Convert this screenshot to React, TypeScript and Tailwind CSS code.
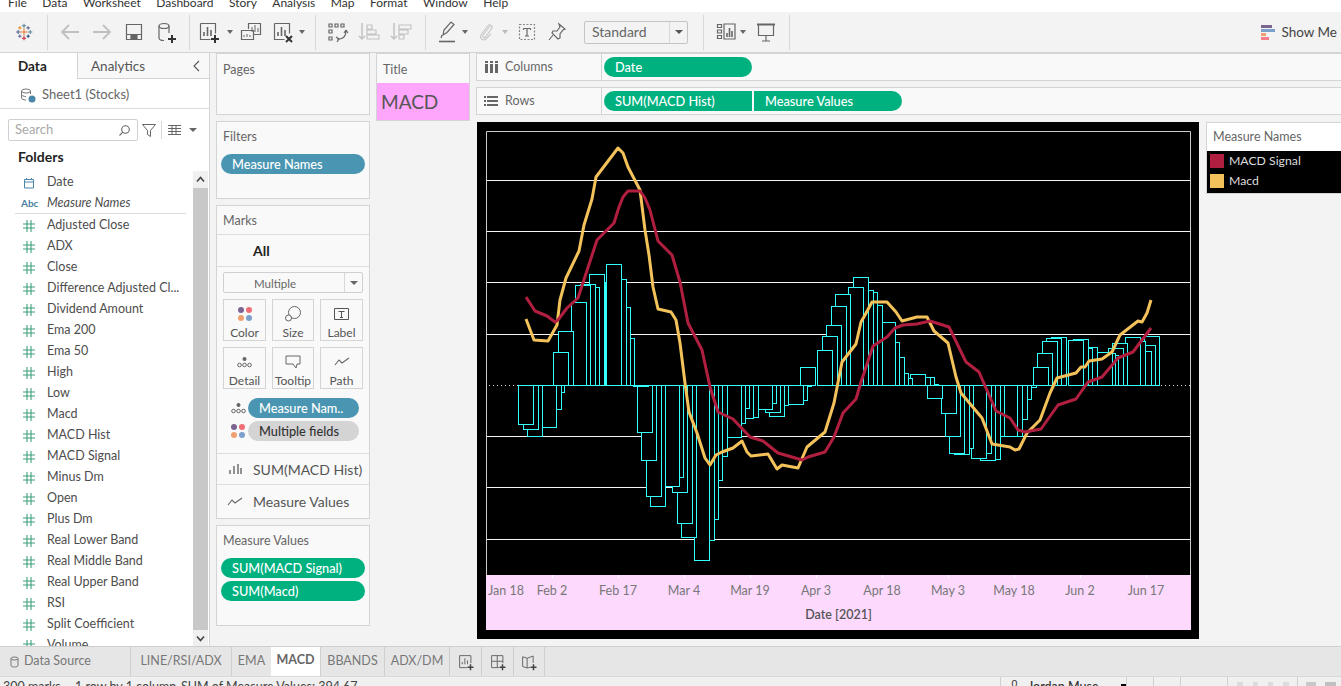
import React from "react";

const FONT = "[font-family:Lato,'Open_Sans',sans-serif]";

const FIELDS = [
  "Adjusted Close", "ADX", "Close", "Difference Adjusted Cl...", "Dividend Amount", "Ema 200", "Ema 50",
  "High", "Low", "Macd", "MACD Hist", "MACD Signal", "Minus Dm", "Open", "Plus Dm", "Real Lower Band",
  "Real Middle Band", "Real Upper Band", "RSI", "Split Coefficient", "Volume",
];

// [left x, far end y] of each histogram bar, in page pixels
const BARS: number[][] = [
  [518, 424], [523, 429], [527, 436], [541, 427], [546, 409], [549, 392], [553, 352], [558, 331], [571, 302],
  [575, 285], [580, 284], [584, 287], [589, 274], [590, 282], [606, 264], [611, 279], [615, 307], [619, 338],
  [633, 386], [637, 432], [641, 460], [646, 496], [650, 506], [664, 486], [668, 477], [672, 492], [677, 523],
  [681, 537], [694, 560], [699, 540], [703, 519], [707, 480], [712, 456], [726, 437], [730, 423], [734, 408],
  [738, 418], [743, 417], [757, 409], [761, 403], [765, 412], [769, 416], [773, 405], [788, 404], [792, 400],
  [796, 386], [800, 367], [817, 350], [822, 336], [826, 325], [831, 306], [835, 294], [848, 287], [853, 277],
  [858, 290], [862, 292], [867, 305], [880, 322], [884, 342], [889, 357], [893, 373], [897, 378], [910, 374],
  [915, 377], [919, 377], [923, 384], [927, 398], [941, 413], [945, 436], [949, 453], [954, 454], [958, 448],
  [971, 458], [976, 453], [980, 460], [985, 459], [989, 436], [1002, 436], [1007, 436], [1012, 419], [1016, 399],
  [1021, 387], [1033, 367], [1037, 353], [1042, 341], [1046, 338], [1051, 337], [1068, 340], [1073, 339],
  [1077, 348], [1082, 347], [1097, 352], [1100, 353], [1103, 355], [1108, 348], [1112, 343], [1125, 337],
  [1130, 341], [1136, 351], [1140, 345], [1144, 336],
];

const MACD =
  "526,319 534,340 548,341 557,325 560,300 566,278 579,251 584,225 592,199 596,177 618,148 623,153 628,167 640,190 645,230 649,255 653,287 658,309 671,312 676,320 680,343 685,383 689,412 697,433 705,458 710,465 716,455 722,452 733,448 742,441 747,452 751,456 768,454 777,469 782,465 798,468 807,447 825,432 834,403 842,362 856,344 861,322 865,315 872,302 887,302 896,312 902,321 917,317 927,317 934,331 948,343 956,377 961,393 982,418 992,444 1010,447 1015,450 1019,449 1027,433 1040,420 1050,393 1057,378 1076,373 1081,367 1085,367 1089,361 1102,359 1112,352 1120,335 1138,321 1142,322 1147,313 1151,300";
const SIGNAL =
  "526,297 535,311 547,316 555,322 558,320 567,308 578,298 597,240 614,223 619,207 623,197 628,191 640,191 645,198 650,210 658,241 672,255 680,282 688,323 702,350 710,387 718,412 733,419 750,437 763,441 778,453 792,457 802,460 808,457 825,452 834,437 843,413 856,399 861,382 873,346 887,337 895,328 903,325 917,324 930,321 949,327 966,362 979,372 996,411 1010,418 1018,430 1025,432 1041,429 1058,405 1076,399 1088,382 1102,377 1118,358 1133,352 1151,328";

function Ic({ children, size = 24 }: { children: React.ReactNode; size?: number }) {
  return (
    <svg width={size} height={size} viewBox="0 0 24 24" fill="none" stroke="#666" strokeWidth="1.2">
      {children}
    </svg>
  );
}

function Slot({ children, className = "" }: { children: React.ReactNode; className?: string }) {
  return <div className={`w-8 h-8 shrink-0 flex items-center justify-center ${className}`}>{children}</div>;
}

function Caret({ className = "" }: { className?: string }) {
  return (
    <div className={`w-[10px] shrink-0 flex justify-center ${className}`}>
      <div className="w-0 h-0 border-l-[3.5px] border-r-[3.5px] border-t-[4px] border-l-transparent border-r-transparent border-t-[#666]" />
    </div>
  );
}

function Sep({ className = "" }: { className?: string }) {
  return <div className={`w-px h-[35px] bg-[#d8d8d8] shrink-0 ${className}`} />;
}

function Plus() {
  return <path d="M14 19h8M18 15v8" stroke="#333" strokeWidth="2" />;
}

function Logo() {
  const crosses = [
    [12, 12, 4.5, "#e8762c"], [12, 4.5, 2.5, "#5b879b"], [12, 19.5, 2.5, "#c72037"], [5, 12, 2.5, "#5b6591"],
    [19.5, 12, 2.5, "#5b879b"], [7, 7, 2, "#eb912b"], [17, 7, 2, "#5b6591"], [7, 17, 2, "#5c6692"], [17, 17, 2, "#1f447a"],
  ] as const;
  return (
    <svg width="20" height="20" viewBox="0 0 24 24" fill="none" strokeWidth="1.3">
      {crosses.map(([x, y, r, c], i) => (
        <path key={i} d={`M${x - r} ${y}h${r * 2}M${x} ${y - r}v${r * 2}`} stroke={c} />
      ))}
    </svg>
  );
}

function Toolbar() {
  return (
    <div className="h-[41px] flex items-center bg-[#f3f3f3] shrink-0 border-b border-[#d4d4d4]">
      <div className="w-[47px] flex justify-center shrink-0"><Logo /></div>
      <Sep />
      <Slot className="ml-[6px]">
        <Ic><path d="M21 12H4M11 5l-7 7 7 7" stroke="#c0c0c0" strokeWidth="1.8" /></Ic>
      </Slot>
      <Slot>
        <Ic><path d="M3 12h17M13 5l7 7-7 7" stroke="#c0c0c0" strokeWidth="1.8" /></Ic>
      </Slot>
      <Slot>
        <Ic><path d="M4.5 4.5h15v15h-15zM4.5 14.5h15" /><path d="M9 15h6v4H9z" fill="#666" /></Ic>
      </Slot>
      <Slot>
        <Ic>
          <ellipse cx="10" cy="6" rx="5" ry="2.5" />
          <path d="M5 6v12c0 1.4 2 2.5 5 2.5M15 6v7" />
          <Plus />
        </Ic>
      </Slot>
      <Sep className="ml-[7px]" />
      <Slot className="ml-[3px]">
        <Ic>
          <path d="M3.5 3.5h15v10M3.5 3.5v16h10" />
          <path d="M7 16v-4M10.5 16V7M14 16v-6" strokeWidth="1.6" />
          <Plus />
        </Ic>
      </Slot>
      <Caret />
      <Slot>
        <Ic>
          <path d="M9.5 9V3.5h12v11H15M2.5 10.5h12v9h-12z" />
          <path d="M13 12V7M16 12V5M19 12V8M5 17v-2M8 17v-3M11 17v-2" strokeWidth="1" />
        </Ic>
      </Slot>
      <Slot>
        <Ic>
          <path d="M3.5 3.5h15v10M3.5 3.5v16h10" />
          <path d="M7 16v-4M10.5 16V7M14 16v-6" strokeWidth="1.6" />
          <path d="M15 16l6 6M21 16l-6 6" stroke="#333" strokeWidth="2" />
        </Ic>
      </Slot>
      <Caret className="-ml-[2px]" />
      <Sep className="ml-[8px]" />
      <Slot className="ml-[5px]">
        <Ic>
          <path d="M4 4h3v3H4zM10 4h3v3h-3zM16 4h3v3h-3zM4 10h3v3H4zM4 17h3v3H4zM12 19h3" />
          <path d="M21 11c0 4-2 7-6 8M11 17l3 2-2 3M21 10l2 3M21 10l-2 3" />
        </Ic>
      </Slot>
      <Slot>
        <Ic>
          <path d="M5 3v16M2 16l3 3 3-3" stroke="#c4c4c4" strokeWidth="1.5" />
          <path d="M10 5h5v4h-5zM10 10h9v4h-9zM10 15h12v4H10z" stroke="#c4c4c4" />
        </Ic>
      </Slot>
      <Slot>
        <Ic>
          <path d="M5 3v16M2 16l3 3 3-3" stroke="#c4c4c4" strokeWidth="1.5" />
          <path d="M10 5h12v4H10zM10 10h9v4h-9zM10 15h5v4h-5z" stroke="#c4c4c4" />
        </Ic>
      </Slot>
      <Sep className="ml-[8px]" />
      <Slot className="ml-[5px]">
        <Ic>
          <path d="M8 15l1-5 7-8 3 2.5-7 8zM7 15l-1 3" />
          <path d="M4 21.5h16" strokeWidth="1.6" />
        </Ic>
      </Slot>
      <Caret className="-ml-[3px]" />
      <Slot>
        <Ic>
          <path d="M16 6l-7 9c-1.4 2 1 3.6 2.4 2l6-8c2.2-3-1.6-5.6-3.6-3l-6.5 8.5c-3 4 2.6 7.6 5.4 3.6L17 14" stroke="#c8c8c8" />
        </Ic>
      </Slot>
      <Caret className="-ml-[2px] opacity-40" />
      <Slot className="ml-px">
        <Ic>
          <path d="M4.5 4.5h15v15h-15z" strokeDasharray="2 1.5" stroke="#888" />
          <path d="M8.5 8.5h7M12 8.5v7.5M10 16h4M8.5 8.5v1.5M15.5 8.5v1.5" />
        </Ic>
      </Slot>
      <Slot className="-ml-[2px]">
        <Ic>
          <path d="M14 4l6 5-2 1-3 4 0 4-2 1-6-6 1-2 4 0 3-4z" />
          <path d="M8 15l-4 5" />
        </Ic>
      </Slot>
      <div className="ml-[11px] w-[104px] h-[23px] border border-[#c4c4c4] rounded-[2px] flex items-center shrink-0">
        <span className="flex-1 pl-[7px] pb-px text-[14px] text-[#666]">Standard</span>
        <div className="w-[18px] h-full border-l border-[#d8d8d8] flex items-center justify-center">
          <div className="w-0 h-0 border-l-[4px] border-r-[4px] border-t-[4px] border-l-transparent border-r-transparent border-t-[#555]" />
        </div>
      </div>
      <Sep className="ml-[15px]" />
      <Slot className="ml-[6px]">
        <Ic>
          <path d="M3.5 4.5h4v3h-4zM3.5 10h4v3h-4zM3.5 15.5h4v3h-4zM10 4h11v15H10z" />
          <path d="M13 17v-4M15.5 17V8M18 17v-6" strokeWidth="1.6" />
        </Ic>
      </Slot>
      <Caret className="-ml-[4px]" />
      <Slot className="ml-[2px]">
        <Ic>
          <path d="M3 4.5h18" strokeWidth="2" />
          <path d="M4.5 5v10.5h15V5M12 15.5v5M8 21h8" />
        </Ic>
      </Slot>
      <Sep className="ml-[7px]" />
      <div className="ml-auto pr-[4px] flex items-center gap-[6px]">
        <div className="flex flex-col gap-px w-[14px]">
          <div className="h-[3px] w-[11px] bg-[#7b6490]" />
          <div className="h-[3px] w-[14px] bg-[#7ba0cc]" />
          <div className="h-[3px] w-[5px] bg-[#f0a070]" />
          <div className="h-[3px] w-[8px] bg-[#f57f88]" />
        </div>
        <span className="text-[13.5px] text-[#444]">Show Me</span>
      </div>
    </div>
  );
}

function Sidebar() {
  return (
    <div className="w-[210px] shrink-0 bg-white border-r border-[#d4d4d4] flex flex-col overflow-hidden">
      <div className="h-[26px] flex shrink-0 text-[13.5px]">
        <div className="w-[77px] flex items-center pl-[18px] pt-px font-bold text-[#222]">Data</div>
        <div className="flex-1 flex items-center bg-[#f8f8f8] border-l border-b border-[#d4d4d4] pl-[13px] pt-px text-[#555]">
          Analytics
          <svg className="ml-auto mr-[7px]" width="10" height="12" viewBox="0 0 10 12" fill="none" stroke="#555" strokeWidth="1.1">
            <path d="M7 1L2 6l5 5" />
          </svg>
        </div>
      </div>
      <div className="h-[30px] shrink-0 flex items-center pl-[20px] pt-[3px] gap-[6px] border-b border-[#dcdcdc] text-[13px] text-[#666]">
        <svg width="16" height="16" viewBox="0 0 16 16" fill="none" stroke="#777" strokeWidth="1">
          <ellipse cx="6" cy="4" rx="4.5" ry="2" />
          <path d="M1.5 4v7c0 1 2 2 4.5 2M10.5 4v3M1.5 7.5c0 1 2 2 4.5 2" />
          <circle cx="12" cy="12" r="3.5" fill="#4a86a8" stroke="none" />
        </svg>
        <span>Sheet1 (Stocks)</span>
      </div>
      <div className="h-[38px] shrink-0 flex items-center pl-[8px] pt-[4px]">
        <div className="w-[130px] h-[22px] border border-[#d0d0d0] rounded-[2px] flex items-center justify-between px-[6px]">
          <span className="text-[13px] text-[#a8a8a8]">Search</span>
          <svg width="13" height="13" viewBox="0 0 13 13" fill="none" stroke="#666" strokeWidth="1.1">
            <circle cx="7.5" cy="5.5" r="3.8" />
            <path d="M4.8 8.2L1.5 11.5" />
          </svg>
        </div>
        <svg className="ml-[3px]" width="16" height="16" viewBox="0 0 16 16" fill="none" stroke="#666" strokeWidth="1">
          <path d="M1.5 2.5h13L9.5 8.5v6l-3-2v-4z" />
        </svg>
        <div className="w-px h-[18px] bg-[#d8d8d8] ml-[4px]" />
        <svg className="ml-[6px]" width="13" height="10" viewBox="0 0 13 10" fill="none" stroke="#666" strokeWidth="1">
          <path d="M0 .5h13M0 3.5h13M0 6.5h13M0 9.5h13M4 0v10M8 0v10" />
        </svg>
        <div className="ml-[8px] w-0 h-0 border-l-[4px] border-r-[4px] border-t-[4px] border-l-transparent border-r-transparent border-t-[#666]" />
      </div>
      <div className="h-[24px] shrink-0 flex items-center pl-[18px] pb-[6px] text-[14px] font-bold text-[#222]">Folders</div>
      <div className="flex-1 flex min-h-0">
        <div className="flex-1 overflow-hidden pt-px text-[12.5px] text-[#4d4d4d]">
          <div className="h-[21px] flex items-center">
            <div className="w-[47px] pl-[23px]">
              <svg width="12" height="12" viewBox="0 0 12 12" fill="none" stroke="#4a86a8" strokeWidth="1">
                <path d="M1.5 2.5h9v8.500h-9zM1.500 5h9M3.500 1v2M8.500 1v2" />
              </svg>
            </div>
            <span>Date</span>
          </div>
          <div className="h-[20px] flex items-center">
            <div className="w-[47px] pl-[21px] text-[10px] font-bold text-[#4a7f9f]">Abc</div>
            <span className="italic">Measure Names</span>
          </div>
          <div className="h-px bg-[#dcdcdc] ml-[15px] mr-[7px] mb-px" />
          {FIELDS.map((f) => (
            <div key={f} className="h-[21px] flex items-center whitespace-nowrap">
              <div className="w-[47px] pl-[23px] shrink-0">
                <svg width="12" height="12" viewBox="0 0 12 12" fill="none" stroke="#3fa07c" strokeWidth="1.1">
                  <path d="M4 0v12M8 0v12M0 4h12M0 8h12" />
                </svg>
              </div>
              <span>{f}</span>
            </div>
          ))}
        </div>
        <div className="w-[15px] shrink-0 flex flex-col bg-[#f0f0f0] mr-px">
          <div className="h-[17px] flex items-center justify-center">
            <svg width="9" height="7" viewBox="0 0 9 7" fill="none" stroke="#444" strokeWidth="1.6"><path d="M1 5.500l3.500-4 3.500 4" /></svg>
          </div>
          <div className="flex-1 bg-[#c8c8c8]" />
          <div className="h-[16px] flex items-center justify-center">
            <svg width="9" height="7" viewBox="0 0 9 7" fill="none" stroke="#444" strokeWidth="1.6"><path d="M1 1.500l3.500 4 3.500-4" /></svg>
          </div>
        </div>
      </div>
    </div>
  );
}

function Card({ title, className = "", titleClass = "pt-[2px]", children }: { title: string; className?: string; titleClass?: string; children?: React.ReactNode }) {
  return (
    <div className={`bg-[#f9f9f9] border border-[#d4d4d4] shrink-0 ${className}`}>
      <div className={`h-[29px] flex items-center pl-[6px] text-[12.5px] text-[#666] ${titleClass}`}>{title}</div>
      {children}
    </div>
  );
}

function MarkBtn({ label, children }: { label: string; children: React.ReactNode }) {
  return (
    <div className="h-[42px] border border-[#d4d4d4] flex flex-col items-center justify-between pt-[4px] text-[12px] text-[#555] leading-[14px]">
      <div className="h-[20px] flex items-center">{children}</div>
      <span>{label}</span>
    </div>
  );
}

function Dots4({ size = 16 }: { size?: number }) {
  return (
    <svg width={size} height={size} viewBox="0 0 16 16">
      <circle cx="4" cy="4" r="3" fill="#7b6490" />
      <circle cx="12" cy="4" r="3" fill="#f06d78" />
      <circle cx="4" cy="12" r="3" fill="#f0a070" />
      <circle cx="12" cy="12" r="3" fill="#7ba0cc" />
    </svg>
  );
}

function Dots3() {
  return (
    <svg width="15" height="12" viewBox="0 0 15 12" fill="none" stroke="#666" strokeWidth="1">
      <circle cx="7.500" cy="3" r="2" fill="#666" stroke="none" />
      <circle cx="2.500" cy="9" r="1.800" />
      <circle cx="7.500" cy="9" r="1.800" />
      <circle cx="12.500" cy="9" r="1.800" />
    </svg>
  );
}

function Pill({ label, color = "bg-[#00b180] text-white", className = "" }: { label: string; color?: string; className?: string }) {
  return (
    <div className={`h-5 flex items-center pl-[11px] pt-px text-[12.75px] font-medium rounded-[10px] whitespace-nowrap ${color} ${className}`}>
      {label}
    </div>
  );
}

function SideCards() {
  return (
    <div className="w-[154px] shrink-0 flex flex-col gap-[6px]">
      <Card title="Pages" className="h-[62px]" titleClass="pt-[4px]" />
      <Card title="Filters" className="h-[78px]">
        <div className="px-[4px] pt-[3px]">
          <Pill label="Measure Names" color="bg-[#4a96b2] text-white" />
        </div>
      </Card>
      <div className="h-[314px] bg-[#f9f9f9] border border-[#d4d4d4] shrink-0 flex flex-col">
        <div className="h-[29px] flex items-center pl-[6px] pt-[2px] text-[12.5px] text-[#666] border-b border-[#dedede] shrink-0">Marks</div>
        <div className="h-[32px] flex items-center pl-[36px] text-[14px] font-bold text-[#222] border-b border-[#dedede] shrink-0">All</div>
        <div className="px-[6px] pt-[5px] shrink-0">
          <div className="h-[21px] border border-[#d0d0d0] rounded-[2px] flex items-center">
            <span className="flex-1 pl-[30px] pt-[2px] text-[11.5px] text-[#666]">Multiple</span>
            <div className="w-[18px] h-full border-l border-[#d8d8d8] flex items-center justify-center">
              <div className="w-0 h-0 border-l-[4px] border-r-[4px] border-t-[4px] border-l-transparent border-r-transparent border-t-[#666]" />
            </div>
          </div>
          <div className="grid grid-cols-[43px_42px_43px] gap-x-[6px] gap-y-[6px] mt-[6px]">
            <MarkBtn label="Color"><Dots4 /></MarkBtn>
            <MarkBtn label="Size">
              <svg width="18" height="18" viewBox="0 0 18 18" fill="none" stroke="#666" strokeWidth="1">
                <circle cx="10.500" cy="7.500" r="6" fill="#f9f9f9" />
                <circle cx="4.500" cy="13" r="3" fill="#f9f9f9" />
              </svg>
            </MarkBtn>
            <MarkBtn label="Label">
              <svg width="15" height="13" viewBox="0 0 15 13" fill="none" stroke="#555" strokeWidth="1">
                <path d="M.5.500h14v11H.5zM4.500 3.500h6M7.500 3.500v6M6 9.500h3" />
              </svg>
            </MarkBtn>
            <MarkBtn label="Detail"><Dots3 /></MarkBtn>
            <MarkBtn label="Tooltip">
              <svg width="16" height="14" viewBox="0 0 16 14" fill="none" stroke="#666" strokeWidth="1">
                <path d="M1 1h14v8h-3l-1 4-3-4H1z" />
              </svg>
            </MarkBtn>
            <MarkBtn label="Path">
              <svg width="16" height="10" viewBox="0 0 16 10" fill="none" stroke="#666" strokeWidth="1.100">
                <path d="M1 8l4-5 3 3 7-5" />
              </svg>
            </MarkBtn>
          </div>
        </div>
        <div className="flex flex-col gap-[3px] mt-[9px] shrink-0">
          <div className="flex items-center">
            <div className="w-[31px] flex justify-end pr-[2px]"><Dots3 /></div>
            <Pill label="Measure Nam.." color="bg-[#4a96b2] text-white" className="w-[111px]" />
          </div>
          <div className="flex items-center">
            <div className="w-[31px] flex justify-end pr-[2px]"><Dots4 /></div>
            <Pill label="Multiple fields" color="bg-[#d4d4d4] text-[#333]" className="w-[111px]" />
          </div>
        </div>
        <div className="mt-[12px] h-[32px] flex items-center border-t border-b border-[#dedede] text-[14px] text-[#555] shrink-0">
          <div className="w-[36px] flex justify-center">
            <svg width="14" height="12" viewBox="0 0 14 12" fill="none" stroke="#666" strokeWidth="1.400">
              <path d="M2 11V7M6 11V3M10 11V1M13 11V5" />
            </svg>
          </div>
          SUM(MACD Hist)
        </div>
        <div className="flex-1 flex items-center text-[14px] text-[#555]">
          <div className="w-[36px] flex justify-center">
            <svg width="16" height="10" viewBox="0 0 16 10" fill="none" stroke="#666" strokeWidth="1.100">
              <path d="M1 8l4-5 3 3 7-5" />
            </svg>
          </div>
          Measure Values
        </div>
      </div>
      <Card title="Measure Values" className="h-[101px]">
        <div className="px-[4px] pt-[3px] flex flex-col gap-[3px]">
          <Pill label="SUM(MACD Signal)" />
          <Pill label="SUM(Macd)" />
        </div>
      </Card>
    </div>
  );
}

function Shelf({ label, icon, children }: { label: string; icon: React.ReactNode; children: React.ReactNode }) {
  return (
    <div className="h-[28px] bg-[#f9f9f9] border-y border-l border-[#d4d4d4] flex items-center">
      <div className="w-[125px] h-full flex items-center border-r border-[#d4d4d4] pl-[7px] gap-[7px] text-[12.5px] text-[#666] shrink-0">
        {icon}
        {label}
      </div>
      <div className="flex pl-[2px] gap-[2px]">{children}</div>
    </div>
  );
}

function Chart() {
  const grid = [180, 231, 282, 334, 436, 487, 539];
  return (
    <svg className="block" width="705" height="444" viewBox="486 131 705 444">
      <rect x="486" y="131" width="705" height="444" fill="#000" />
      {grid.map((y) => (
        <line key={y} x1="487" x2="1191" y1={y + 0.5} y2={y + 0.5} stroke="#f5f5f5" />
      ))}
      <line x1="489" x2="1191" y1="385.500" y2="385.500" stroke="#ddd" strokeDasharray="1 3" />
      {[...BARS].reverse().map(([x, y]) => (
        <rect
          key={x}
          x={x + 0.5}
          y={Math.min(y, 385) + 0.5}
          width="15"
          height={Math.abs(y - 385)}
          fill="#000"
          stroke="#3ff"
        />
      ))}
      <polyline points={MACD} fill="none" stroke="#f3c25a" strokeWidth="3" strokeLinejoin="round" />
      <polyline points={SIGNAL} fill="none" stroke="#b11f40" strokeWidth="3" strokeLinejoin="round" />
      <path d="M486.500 575V131.500H1190.500V575" fill="none" stroke="#ccc" />
    </svg>
  );
}

function Workspace() {
  const ticks = ["Feb 2", "Feb 17", "Mar 4", "Mar 19", "Apr 3", "Apr 18", "May 3", "May 18", "Jun 2", "Jun 17"];
  return (
    <div className="flex-1 min-w-0 flex flex-col">
      <div className="flex flex-col gap-[6px] shrink-0">
        <Shelf
          label="Columns"
          icon={
            <svg width="14" height="12" viewBox="0 0 14 12" fill="#666">
              <path d="M1 3h3v9H1zM6 3h3v9H6zM11 3h3v9h-3zM1 0h3v2H1zM6 0h3v2H6zM11 0h3v2h-3z" />
            </svg>
          }
        >
          <Pill label="Date" className="w-[148px]" />
        </Shelf>
        <Shelf
          label="Rows"
          icon={
            <svg width="14" height="12" viewBox="0 0 14 12" fill="#666">
              <path d="M0 1h2v2H0zM3 1h11v2H3zM0 5h2v2H0zM3 5h11v2H3zM0 9h2v2H0zM3 9h11v2H3z" />
            </svg>
          }
        >
          <Pill label="SUM(MACD Hist)" className="w-[148px] rounded-r-none" />
          <Pill label="Measure Values" className="w-[148px] rounded-l-none" />
        </Shelf>
      </div>
      <div className="flex mt-[7px] pl-px">
        <div className="w-[722px] h-[517px] bg-black pl-[9px] pt-[9px] shrink-0">
          <Chart />
          <div className="w-[705px] h-[55px] bg-[#fcd9fd] flex flex-col">
            <div className="h-[31px] flex items-center text-[12.5px] text-[#777] whitespace-nowrap">
              <div className="w-[33px] pl-[2px] pt-px">Jan 18</div>
              {ticks.map((t) => (
                <div key={t} className="relative w-[66px] h-full pt-px flex items-center justify-center shrink-0">
                  <div className="absolute top-0 left-1/2 w-px h-[3px] bg-white" />
                  {t}
                </div>
              ))}
            </div>
            <div className="text-center text-[12.5px] font-semibold text-[#555]">Date [2021]</div>
          </div>
        </div>
        <div className="ml-[7px] flex-1 h-[72px] border border-[#d4d4d4] border-r-0 bg-white flex flex-col">
          <div className="h-[28px] flex items-center pl-[6px] text-[12.5px] text-[#666] shrink-0">Measure Names</div>
          <div className="flex-1 bg-black text-[12.25px] text-[#ddd] flex flex-col gap-[6px] pl-[3px] pt-[3px] leading-none">
            <div className="h-[14px] flex items-center gap-[5px]">
              <div className="w-[14px] h-[14px] bg-[#b11f40]" />
              MACD Signal
            </div>
            <div className="h-[14px] flex items-center gap-[5px]">
              <div className="w-[14px] h-[14px] bg-[#f3c25a]" />
              Macd
            </div>
          </div>
        </div>
      </div>
    </div>
  );
}

function Tabs() {
  const tabs = [
    { t: "LINE/RSI/ADX", w: "w-[101px]" },
    { t: "EMA", w: "w-[40px]" },
    { t: "MACD", w: "w-[49px]", on: true },
    { t: "BBANDS", w: "w-[64px]" },
    { t: "ADX/DM", w: "w-[65px]" },
  ];
  return (
    <div className="h-[30px] shrink-0 bg-[#e6e6e6] border-t border-[#cfcfcf] flex text-[12.5px] text-[#777]">
      <div className="w-[130px] flex items-center pl-[10px] gap-[5px] shrink-0">
        <svg width="9" height="12" viewBox="0 0 9 12" fill="none" stroke="#777" strokeWidth="1">
          <ellipse cx="4.500" cy="2.500" rx="3.500" ry="1.500" />
          <path d="M1 2.500v7c0 2 7 2 7 0v-7" />
        </svg>
        Data Source
      </div>
      {tabs.map((x) =>
        x.on ? (
          <div key={x.t} className={`${x.w} shrink-0 bg-white flex items-center justify-center font-bold text-[#666] pb-[3px]`}>{x.t}</div>
        ) : (
          <div key={x.t} className={`${x.w} shrink-0 flex items-center justify-center border-l border-[#cfcfcf]`}>{x.t}</div>
        )
      )}
      {[0, 1, 2].map((i) => (
        <div key={i} className="w-[32px] shrink-0 border-l border-[#cfcfcf] flex items-center justify-center last:border-r">
          <svg width="18" height="18" viewBox="0 0 24 24" fill="none" stroke="#666" strokeWidth="1.300">
            {i === 0 && <path d="M3.500 3.500h15v10M3.500 3.500v16h10M7 15v-3M10.500 15V7M14 15v-5" />}
            {i === 1 && <path d="M3.500 3.500h15v10M3.500 3.500v16h10M3.500 11h15M11 3.500v16" />}
            {i === 2 && <path d="M3.500 5l6 2v13l-6-2zM9.500 7l8-3v9M9.500 20l4-1" />}
            <path d="M14 19h8M18 15v8" stroke="#444" strokeWidth="2" />
          </svg>
        </div>
      ))}
    </div>
  );
}

function StatusBar() {
  return (
    <div className="h-[10px] shrink-0 bg-[#f0f0f0] border-t border-[#d8d8d8] overflow-hidden flex items-start text-[12.5px] text-[#444] leading-[16px] whitespace-nowrap">
      <span className="ml-[3px] w-[72px] pt-[2px]">300 marks</span>
      <span className="w-[106px] pt-[2px]">1 row by 1 column</span>
      <span className="pt-[2px]">SUM of Measure Values: 394.67</span>
      <div className="ml-auto flex h-full text-[#333]">
        <div className="w-[28px] border-l border-[#d0d0d0] text-center text-[10px] leading-[12px]">0</div>
        <div className="w-[98px] font-medium pt-[2px] flex">
          Jordan Muse
          <div className="ml-[22px] mt-[5px] w-[7px] h-[2px] bg-black" />
        </div>
        <div className="w-[27px] border-l border-[#d0d0d0]" />
        <div className="w-[27px] border-l border-[#d0d0d0]" />
        <div className="w-[47px] border-l border-[#d0d0d0]" />
        <div className="w-[71px] border-x border-[#d0d0d0] flex items-start justify-center gap-[10px] pt-[5px]">
          <div className="w-[6px] h-[4px] bg-[#dcdcdc]" />
          <div className="w-[5px] h-[4px] bg-[#dcdcdc]" />
          <div className="w-[5px] h-[4px] bg-[#dcdcdc]" />
          <div className="w-[6px] h-[4px] bg-[#dcdcdc]" />
        </div>
        <div className="w-[43px] flex items-start gap-[9px] pl-[8px] pt-[5px]">
          <div className="w-[10px] h-[4px] bg-[#c8c8c8]" />
          <div className="w-[11px] h-[4px] bg-[#c0c0c0]" />
        </div>
      </div>
    </div>
  );
}

export default function App() {
  const menu = ["File", "Data", "Worksheet", "Dashboard", "Story", "Analysis", "Map", "Format", "Window", "Help"];
  return (
    <div className={`w-[1341px] h-[686px] overflow-hidden flex flex-col bg-[#f3f3f3] ${FONT}`}>
      <div className="h-3 shrink-0 bg-white flex items-end pl-[8px] gap-[15.5px] overflow-hidden pb-px text-[12px] leading-[16px] text-[#333]">
        {menu.map((m) => (
          <span key={m}>{m}</span>
        ))}
      </div>
      <Toolbar />
      <div className="flex-1 min-h-0 flex">
        <Sidebar />
        <div className="flex-1 min-w-0 flex pl-[6px] gap-[6px]">
          <SideCards />
          <div className="w-[94px] shrink-0 h-[68px] border border-[#d4d4d4] bg-[#f9f9f9] flex flex-col">
            <div className="h-[29px] flex items-center pl-[6px] pt-[4px] text-[12.5px] text-[#666] shrink-0">Title</div>
            <div className="flex-1 bg-[#fda6fc] flex items-center pl-[4px] pt-px text-[19px] text-[#555]">MACD</div>
          </div>
          <Workspace />
        </div>
      </div>
      <Tabs />
      <StatusBar />
    </div>
  );
}
